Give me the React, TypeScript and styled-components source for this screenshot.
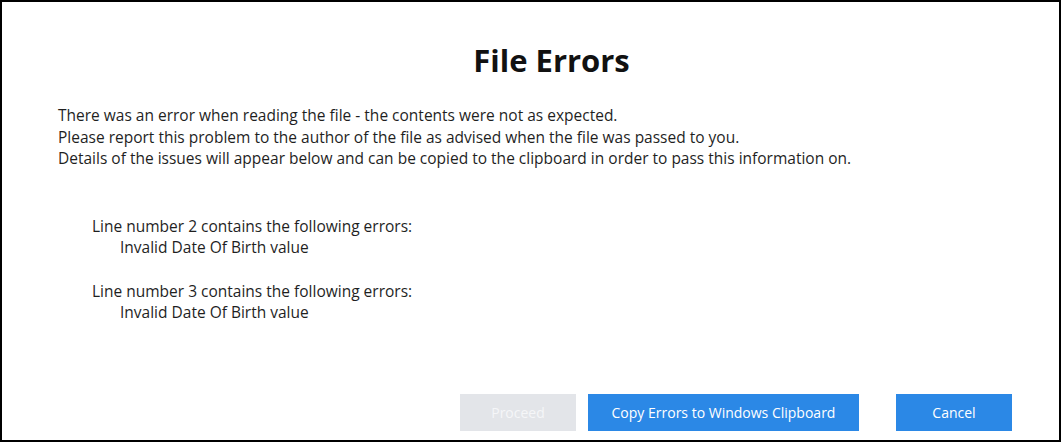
import React from 'react';
import styled, {createGlobalStyle} from 'styled-components';

const GlobalStyle = createGlobalStyle`
  html, body {
    margin: 0;
    padding: 0;
    background: #ffffff;
  }
  * {
    box-sizing: border-box;
  }
`;

const errors = [
  {line: 2, issues: ['Invalid Date Of Birth value']},
  {line: 3, issues: ['Invalid Date Of Birth value']},
];

export default function App(): JSX.Element {
  return (
    <>
      <GlobalStyle />
      <Dialog>
        <Title>File Errors</Title>
        <Intro>
          <p>There was an error when reading the file - the contents were not as expected.</p>
          <p>Please report this problem to the author of the file as advised when the file was passed to you.</p>
          <p>Details of the issues will appear below and can be copied to the clipboard in order to pass this information on.</p>
        </Intro>
        <ErrorList>
          {errors.map(e => (
            <ErrorGroup key={e.line}>
              <div>Line number {e.line} contains the following errors:</div>
              {e.issues.map(i => (
                <Issue key={i}>{i}</Issue>
              ))}
            </ErrorGroup>
          ))}
        </ErrorList>
        <Footer>
          <Button disabled>Proceed</Button>
          <Button wide>Copy Errors to Windows Clipboard</Button>
          <Button spaced>Cancel</Button>
        </Footer>
      </Dialog>
    </>
  );
}
App.displayName = 'App';

const Dialog = styled.div`
  width: 1061px;
  height: 442px;
  border: 2px solid #000;
  display: flex;
  flex-direction: column;
  font-family: 'Open Sans', 'Noto Sans', sans-serif;
  color: #1f1f1f;
`;

const Title = styled.h1`
  margin: 38px 0 0;
  padding-left: 42px;
  text-align: center;
  font-size: 31px;
  line-height: 40px;
  font-weight: 700;
  color: #111;
`;

const Intro = styled.div`
  margin: 25px 0 0 56px;
  font-size: 15.5px;
  line-height: 21.5px;

  p {
    margin: 0;
  }
`;

const ErrorList = styled.div`
  margin: 46px 0 0 90px;
  display: flex;
  flex-direction: column;
  gap: 23px;
  font-size: 15.5px;
  line-height: 21px;
`;

const ErrorGroup = styled.div``;

const Issue = styled.div`
  padding-left: 28px;
`;

const Footer = styled.div`
  margin-top: auto;
  padding: 0 47px 9px 0;
  display: flex;
  justify-content: flex-end;
  gap: 12px;
`;

const Button = styled.button<{wide?: boolean; spaced?: boolean}>`
  height: 37px;
  width: ${p => (p.wide ? '271px' : '116px')};
  margin-left: ${p => (p.spaced ? '25px' : '0')};
  border: none;
  border-radius: 0;
  padding: 0;
  font-family: inherit;
  font-size: 14px;
  color: #fff;
  background: #2b88e6;

  &:disabled {
    background: #e3e5e9;
    color: #f5f6f8;
  }
`;
